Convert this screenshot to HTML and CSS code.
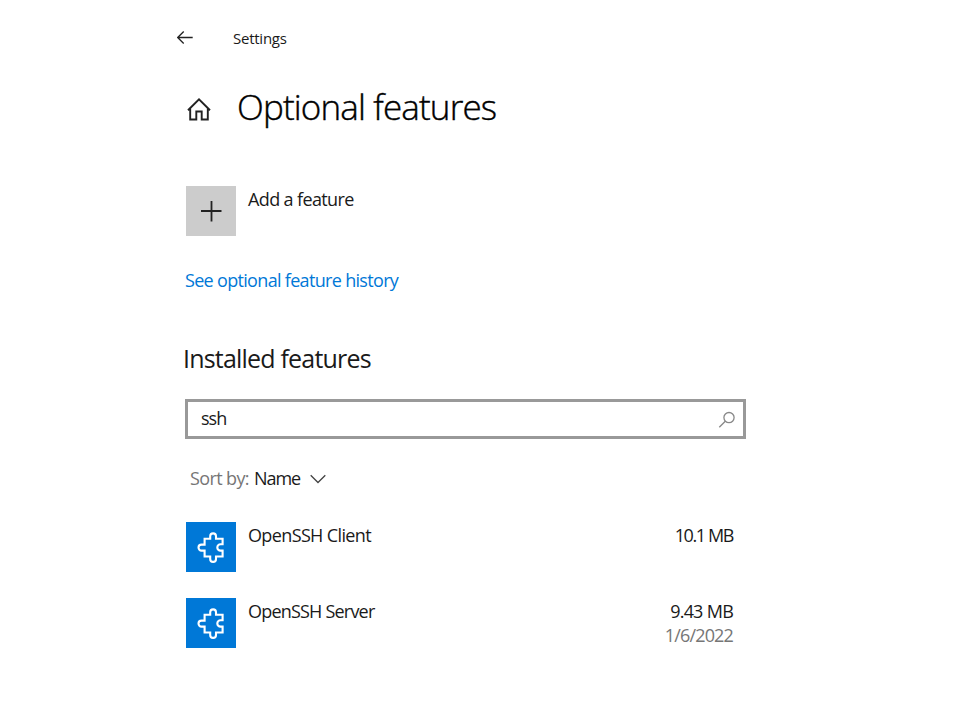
FILE: index.html
```html
<!DOCTYPE html>
<html lang="en">
<head>
<meta charset="utf-8">
<title>Settings</title>
<link rel="stylesheet" href="styles.css">
</head>
<body>
<main class="page">
  <header class="titlebar">
    <svg class="back" width="17" height="14" viewBox="0 0 17 14"><path d="M.7 6.5H15.7M6.7 .5L.7 6.5L6.7 12.5"/></svg>
    <span class="app-name">Settings</span>
  </header>
  <div class="heading">
    <svg class="home" width="24" height="24" viewBox="0 0 24 24"><path d="M1 12.2L12 1.4L23 12.2M3.2 10.5V21.5H9.3V13.5H14.7V21.5H20.8V10.5"/></svg>
    <h1><span class="t-title">Optional features</span></h1>
  </div>
  <div class="row add">
    <div class="tile tile-add"><svg width="50" height="50" viewBox="0 0 50 50"><path d="M15 25H35.5M25.5 15V35.5"/></svg></div>
    <span class="name t-add">Add a feature</span>
  </div>
  <a class="history"><span class="t-history">See optional feature history</span></a>
  <h2><span class="t-installed">Installed features</span></h2>
  <div class="search">
    <span class="t-ssh">ssh</span>
    <svg width="18" height="18" viewBox="0 0 18 18"><circle cx="11" cy="6.6" r="5.1"/><path d="M7.3 10.3L1.3 16.3"/></svg>
  </div>
  <div class="sort">
    <span class="sort-label t-sort">Sort by:</span>
    <span class="t-name">Name</span>
    <svg width="16" height="10" viewBox="0 0 16 10"><path d="M.7 1.2L8 8.5L15.3 1.2"/></svg>
  </div>
  <div class="row client">
    <div class="tile tile-app"><svg width="50" height="50" viewBox="0 0 50 50"><path d="M18.6 16.8H24.2V14.3A2.9 2.9 0 0 1 30 14.3V16.8H36.6V22.2H34.5A3.2 3.2 0 0 0 34.5 28.6H36.6V34.5H30V37A2.9 2.9 0 0 1 24.2 37V34.5H18.6V28.6H15.5A3 3 0 0 1 15.5 22.6H18.6Z"/></svg></div>
    <span class="name t-client">OpenSSH Client</span>
    <div class="meta"><span class="t-size1">10.1 MB</span></div>
  </div>
  <div class="row server">
    <div class="tile tile-app"><svg width="50" height="50" viewBox="0 0 50 50"><path d="M18.6 16.8H24.2V14.3A2.9 2.9 0 0 1 30 14.3V16.8H36.6V22.2H34.5A3.2 3.2 0 0 0 34.5 28.6H36.6V34.5H30V37A2.9 2.9 0 0 1 24.2 37V34.5H18.6V28.6H15.5A3 3 0 0 1 15.5 22.6H18.6Z"/></svg></div>
    <span class="name t-server">OpenSSH Server</span>
    <div class="meta"><span class="t-size2">9.43 MB</span><span class="date t-date">1/6/2022</span></div>
  </div>
</main>
</body>
</html>
```
FILE: styles.css
```css
* { box-sizing: border-box; }
body {
  margin: 0;
  background: #fff;
  color: #1a1a1a;
  font: 18px/24px "Open Sans", "Noto Sans", sans-serif;
}
svg { display: block; fill: none; stroke: #222; flex: none; }
h1, h2 { margin: 0; font-weight: 400; }
span { white-space: nowrap; }
.page { width: 560px; margin-left: 186px; padding-top: 28px; }

.titlebar { display: flex; align-items: center; height: 20px; margin-left: -9px; font-size: 15px; line-height: 20px; }
.back { stroke-width: 1.3; }
.app-name { margin-left: 39px; letter-spacing: -0.25px; }

.heading { display: flex; align-items: center; height: 50px; margin-top: 34px; }
.home { margin: 5px 0 0 1px; stroke-width: 1.9; }
h1 { margin-left: 26px; font-size: 35px; line-height: 50px; font-weight: 300; color: #000; -webkit-text-stroke: 0.4px #000; }

.row { display: flex; height: 50px; }
.add { margin-top: 54px; }
.tile { width: 50px; height: 50px; flex: none; }
.tile-add { background: #ccc; }
.tile-add svg { stroke-width: 1.8; }
.tile-app { background: #0078d7; }
.tile-app svg { stroke: #fff; stroke-width: 2.1; }
.name { margin: 1px 0 0 12px; }

.history { display: block; margin: 32px 0 0 -1px; height: 24px; color: #0078d7; }
h2 { margin: 49px 0 0 -3px; height: 34px; font-size: 25px; line-height: 34px; }

.search { display: flex; align-items: center; justify-content: space-between; height: 40px; margin: 24px 0 0 -1px; padding: 0 7px 2px 13px; border: 3px solid #999; }
.search svg { margin-top: 3px; stroke: #888; stroke-width: 1.3; }

.sort { display: flex; align-items: center; height: 24px; margin: 27px 0 0 4px; }
.sort-label { color: #767676; margin-right: 5px; }
.sort svg { margin: 1px 0 0 10px; stroke: #444; stroke-width: 1.3; }

.client { margin-top: 32px; }
.server { margin-top: 26px; }
.meta { display: flex; flex-direction: column; align-items: flex-end; margin: 1px 13px 0 auto; }
.date { color: #767676; }

.t-title { letter-spacing: -0.85px; }
.t-add, .t-sort, .t-client { letter-spacing: -0.63px; }
.t-history { letter-spacing: -0.68px; }
.t-ssh { letter-spacing: -1px; }
.t-name { letter-spacing: -1px; }
.t-server { letter-spacing: -0.8px; }
.t-size1 { letter-spacing: -1.4px; }
.t-size2 { letter-spacing: -0.85px; word-spacing: 0.5px; }
.t-date { letter-spacing: -0.85px; }
.t-installed { letter-spacing: -0.8px; }
```
